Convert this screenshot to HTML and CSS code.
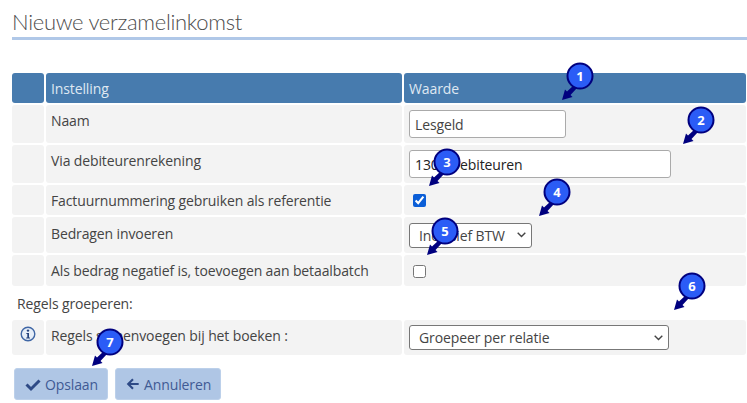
FILE: index.html
```html
<!DOCTYPE html>
<html lang="nl">
<head>
    <meta charset="UTF-8">
    <title>Nieuwe verzamelinkomst</title>
    <link rel="stylesheet" href="styles.css">
</head>
<body>
    <svg class="defs" width="0" height="0">
        <symbol id="pin" viewBox="0 0 34 42">
            <path d="M14 23 L7 29.5 L5 27.5 L2 38 L12.5 35 L10.5 33 L17 26 Z" fill="#00007f"/>
            <circle cx="20" cy="14" r="12.5" fill="#2b5cf6" stroke="#00007f" stroke-width="2"/>
        </symbol>
    </svg>

    <h1 class="titel">Nieuwe verzamelinkomst</h1>

    <table class="instellingen tabel-boven">
        <thead>
            <tr>
                <th class="kol-icoon"></th>
                <th class="kol-naam">Instelling</th>
                <th>Waarde</th>
            </tr>
        </thead>
        <tbody>
            <tr class="rij-naam">
                <td></td>
                <td>Naam</td>
                <td><input class="veld veld-naam" type="text" value="Lesgeld"></td>
            </tr>
            <tr class="rij-via">
                <td></td>
                <td>Via debiteurenrekening</td>
                <td><input class="veld veld-via" type="text" value="1300 Debiteuren"></td>
            </tr>
            <tr class="rij-factuur">
                <td></td>
                <td>Factuurnummering gebruiken als referentie</td>
                <td><input class="vink" type="checkbox" checked></td>
            </tr>
            <tr class="rij-bedrag">
                <td></td>
                <td>Bedragen invoeren</td>
                <td>
                    <select class="keuze keuze-btw">
                        <option>Inclusief BTW</option>
                    </select>
                </td>
            </tr>
            <tr class="rij-negatief">
                <td></td>
                <td>Als bedrag negatief is, toevoegen aan betaalbatch</td>
                <td><input class="vink" type="checkbox"></td>
            </tr>
        </tbody>
    </table>

    <div class="kopje">Regels groeperen:</div>

    <table class="instellingen">
        <tbody>
            <tr class="rij-regels">
                <td class="kol-icoon cel-info">
                    <svg class="info" viewBox="0 0 16 16" width="16" height="16">
                        <circle cx="8" cy="8" r="6.8" fill="#e6eef8" stroke="#3f66a5" stroke-width="1.4"/>
                        <circle cx="8" cy="4.6" r="1.2" fill="#24427c"/>
                        <path d="M6.4 7h2.6v4.4h1v1H6.2v-1h1.1V8H6.4z" fill="#24427c"/>
                    </svg>
                </td>
                <td class="kol-naam">Regels samenvoegen bij het boeken :</td>
                <td>
                    <select class="keuze keuze-regels">
                        <option>Groepeer per relatie</option>
                    </select>
                </td>
            </tr>
        </tbody>
    </table>

    <div class="knoppen">
        <button class="knop knop-opslaan" type="button">
            <svg viewBox="0 0 16 16" width="16" height="16">
                <path d="M1.5 8.5 L6 13 L14.5 4.5" fill="none" stroke="#2e4a86" stroke-width="3"/>
            </svg>
            Opslaan
        </button>
        <button class="knop knop-annuleren" type="button">
            <svg viewBox="0 0 16 16" width="14" height="16">
                <path d="M8 2.5 L2.5 8 L8 13.5 M3 8 H14.5" fill="none" stroke="#2e4a86" stroke-width="2.4"/>
            </svg>
            Annuleren
        </button>
    </div>

    <div class="pin pin-1"><svg><use href="#pin"/></svg><span>1</span></div>
    <div class="pin pin-2"><svg><use href="#pin"/></svg><span>2</span></div>
    <div class="pin pin-3"><svg><use href="#pin"/></svg><span>3</span></div>
    <div class="pin pin-4"><svg><use href="#pin"/></svg><span>4</span></div>
    <div class="pin pin-5"><svg><use href="#pin"/></svg><span>5</span></div>
    <div class="pin pin-6"><svg><use href="#pin"/></svg><span>6</span></div>
    <div class="pin pin-7"><svg><use href="#pin"/></svg><span>7</span></div>
</body>
</html>
```

FILE: styles.css
```css
* {
    box-sizing: border-box;
}

html, body {
    margin: 0;
    padding: 0;
    height: 403px;
    overflow: hidden;
}

body {
    position: relative;
    background-color: #fff;
    color: #444;
    font-family: 'Open Sans', 'Noto Sans', sans-serif;
    font-size: 14px;
    letter-spacing: -0.12px;
    padding-left: 12px;
}

.defs {
    position: absolute;
}

.titel {
    margin: 0;
    height: 40px;
    padding-top: 8px;
    font-family: 'Lato', 'Open Sans', sans-serif;
    font-size: 22px;
    line-height: 28px;
    font-weight: 300;
    letter-spacing: -0.3px;
    color: #4d4d4d;
    border-bottom: 3px solid #b0c8e8;
}

.instellingen {
    width: 738px;
    margin-left: -2px;
    table-layout: fixed;
    border-collapse: separate;
    border-spacing: 2px;
}

.tabel-boven {
    margin-top: 31px;
}

.instellingen th {
    background-color: #477bae;
    border-radius: 3px;
    height: 30px;
    padding: 0 5px;
    font-weight: 400;
    font-size: inherit;
    text-align: left;
    color: #dfe8f2;
}

.kol-icoon {
    width: 32px;
}

.kol-naam {
    width: 356px;
}

.instellingen td {
    background-color: #f3f3f3;
    border-radius: 3px;
    padding: 0 5px;
    line-height: 19px;
    vertical-align: middle;
}

.rij-naam td { height: 38px; }
.rij-via td { height: 38px; }
.rij-factuur td { height: 30px; }
.rij-bedrag td { height: 36px; }
.rij-negatief td { height: 31px; }
.rij-regels td { height: 35px; }

.rij-naam td:nth-child(2),
.rij-via td:nth-child(2),
.rij-regels td:nth-child(2) {
    vertical-align: top;
    padding-top: 6px;
}

.rij-bedrag td:nth-child(2) {
    vertical-align: top;
    padding-top: 7px;
}

.veld {
    display: block;
    height: 28px;
    padding: 0 5px;
    font-family: inherit;
    font-size: inherit;
    letter-spacing: inherit;
    color: #444;
    background-color: #fff;
    border: 1px solid #aaa;
    border-radius: 3px;
}

.veld-naam { width: 157px; }
.veld-via { width: 262px; color: #222; }

.vink {
    display: block;
    width: 13px;
    height: 13px;
    margin: 1px 0 0 4px;
    accent-color: #0b5ed7;
}

.keuze {
    display: block;
    height: 25px;
    padding: 0 0 0 9px;
    font-family: inherit;
    font-size: inherit;
    letter-spacing: inherit;
    color: #444;
    background-color: #fff;
    background-image: url("data:image/svg+xml,%3Csvg xmlns='http://www.w3.org/2000/svg' width='9' height='6'%3E%3Cpath d='M.7.7 4.5 4.5 8.3.7' fill='none' stroke='%23444' stroke-width='1.4'/%3E%3C/svg%3E");
    background-repeat: no-repeat;
    background-position: right 5px center;
    border: 1px solid #777;
    border-radius: 3px;
    appearance: none;
}

.keuze-btw { width: 123px; }
.keuze-regels { width: 260px; }

.kopje {
    height: 30px;
    padding: 6px 0 0 5px;
    line-height: 19px;
}

.cel-info {
    vertical-align: top !important;
    padding-top: 6px !important;
}

.info {
    display: block;
    margin: 0 auto;
}

.knoppen {
    display: flex;
    gap: 7px;
    margin-top: 11px;
    padding-left: 2px;
}

.knop {
    display: flex;
    align-items: center;
    gap: 4px;
    height: 32px;
    padding: 0 10px;
    font-family: inherit;
    font-size: inherit;
    letter-spacing: inherit;
    color: #3f5a94;
    background-color: #afc6e5;
    border: 1px solid #bcd0ea;
    border-radius: 3px;
}

.knop svg {
    flex: none;
}

.knop-opslaan { width: 94px; }
.knop-annuleren { width: 106px; }

/* nummers over het formulier */
.pin {
    position: absolute;
    width: 34px;
    height: 42px;
}

.pin svg {
    display: block;
    width: 34px;
    height: 42px;
}

.pin span {
    position: absolute;
    left: 7px;
    top: 1px;
    width: 26px;
    height: 26px;
    line-height: 26px;
    text-align: center;
    font-size: 13px;
    font-weight: 700;
    color: #fff;
}

.pin-1 { left: 560px; top: 62px; }
.pin-2 { left: 681px; top: 106px; }
.pin-3 { left: 427px; top: 148px; }
.pin-4 { left: 537px; top: 178px; }
.pin-5 { left: 425px; top: 217px; }
.pin-6 { left: 672px; top: 272px; }
.pin-7 { left: 90px; top: 328px; }
```
